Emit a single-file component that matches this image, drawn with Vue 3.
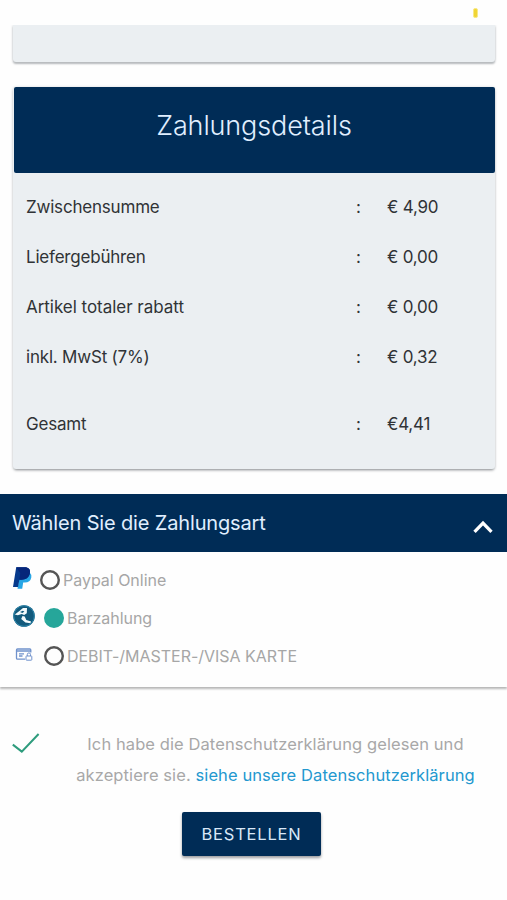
<script setup>
import { ref } from 'vue'

const rows = [
  { label: 'Zwischensumme', value: '€ 4,90' },
  { label: 'Liefergebühren', value: '€ 0,00' },
  { label: 'Artikel totaler rabatt', value: '€ 0,00', wide: true },
  { label: 'inkl. MwSt (7%)', value: '€ 0,32' },
  { label: 'Gesamt', value: '€4,41', total: true },
]
const selected = ref('cash')
</script>

<template>
  <main class="page">
    <header class="status"><span class="battery"></span></header>
    <div class="previous-wrap"><section class="previous"></section></div>

    <section class="details">
      <h1><span>Zahlungsdetails</span></h1>
      <div class="rows">
        <div v-for="row in rows" :key="row.label" class="row" :class="{ total: row.total, wide: row.wide }">
          <span>{{ row.label }}</span><span>:</span><span>{{ row.value }}</span>
        </div>
      </div>
    </section>

    <section class="methods">
      <h2>
        <span>Wählen Sie die Zahlungsart</span>
        <svg width="20" height="14" viewBox="0 0 20 14"><path d="M1.5 11.8 10 3.2 18.5 11.8" fill="none" stroke="#fff" stroke-width="3.3" /></svg>
      </h2>
      <div class="options">
        <div class="option paypal" @click="selected = 'paypal'">
          <svg class="icon" width="19" height="22" viewBox="0 0 19 22">
            <path d="M7 6h10q2 1.5 1.3 4.5-1 5-6.5 5h-1.6l-1 6.2H4.5Z" fill="#27a5e5" />
            <path d="M3.2.3h8.3c4.4 0 6.2 2.3 5.3 6.2-1 4.2-4 6.2-8.2 6.2H6.4L5 20H0Z" fill="#06398c" />
            <path d="M3.2.3h8.3c4.4 0 6.2 2.3 5.3 6.2-1 4.2-4 6.2-8.2 6.2H6.4L7.3 6Z" fill="#06267a" />
          </svg>
          <svg class="radio" :class="{ on: selected === 'paypal' }" viewBox="0 0 20 20"><circle cx="10" cy="10" r="8.8" /></svg>
          <span>Paypal Online</span>
        </div>
        <div class="option" @click="selected = 'cash'">
          <svg class="icon" width="22" height="22" viewBox="0 0 22 22">
            <circle cx="11" cy="11" r="10.8" fill="#125a7c" />
            <circle cx="11" cy="11" r="10.3" fill="none" stroke="#2e86ab" />
            <path d="M1.8 9.4 7 5.4l3-2.4h4l-.2 5.2-2.6 1.9-2.4-1.2-4 1.3Z" fill="#f3fafc" />
            <path d="m7 7 2.8-1.2 1.6.6-2 1.6Z" fill="#125a7c" />
            <path d="m9.5 11 2.2.5 1.6 3.4 4.8 1.5-.7 1.8-5-.6-4.2-3.6Z" fill="#f3fafc" />
          </svg>
          <svg class="radio" :class="{ on: selected === 'cash' }" viewBox="0 0 20 20"><circle cx="10" cy="10" r="8.8" /></svg>
          <span>Barzahlung</span>
        </div>
        <div class="option card" @click="selected = 'card'">
          <svg class="icon" width="22" height="22" viewBox="0 0 22 22">
            <g fill="none" stroke="#7092cc">
              <path d="M12 15.2H4.5q-1 0-1-1V6q0-1 1-1h12.3q1 0 1 1v2.5M3.5 7h14.3" stroke-width="1.3" />
              <path d="M6 9.8h5M6 12h3.5" stroke-width="1.3" />
              <rect x="13" y="12" width="5.8" height="4.2" rx=".6" />
              <path d="M14.3 12v-1.5q0-1.6 1.6-1.6t1.6 1.6V12" />
            </g>
          </svg>
          <svg class="radio" :class="{ on: selected === 'card' }" viewBox="0 0 20 20"><circle cx="10" cy="10" r="8.8" /></svg>
          <span>DEBIT-/MASTER-/VISA KARTE</span>
        </div>
      </div>
    </section>

    <section class="consent">
      <svg width="30" height="24" viewBox="0 0 30 24"><path d="m.8 13.6 9 7L26.6 3" fill="none" stroke="#2e9c7d" stroke-width="2" /></svg>
      <p>Ich habe die Datenschutzerklärung gelesen und<br>akzeptiere sie. <a>siehe unsere Datenschutzerklärung</a></p>
    </section>
    <button><span>BESTELLEN</span></button>
  </main>
</template>

<style>
body { margin: 0; background: #fefefe; }
</style>
<style scoped>
* { box-sizing: border-box; }
.page { height: 900px; overflow: hidden; display: flex; flex-direction: column; background: #fefefe; font-family: Inter, "Liberation Sans", sans-serif; color: #303336; }
.status { height: 25px; flex: none; display: flex; justify-content: flex-end; padding: 8px 29px 0 0; }
.battery { width: 5px; height: 10px; border-radius: 2px; background: #f0d536; border: 1px solid #f8e985; }
.previous-wrap { height: 62px; flex: none; overflow: hidden; padding: 0 12px 0 13px; }
.previous { height: 37px; background: #ebeff2; border-radius: 0 0 3px 3px; box-shadow: 0 2px 2px #b7babd, 0 0 3px #d2d5d7; }
.details { flex: none; margin: 0 12px 0 13px; height: 382px; border-radius: 3px; background: #ebeff2; box-shadow: 0 2px 3px -1px #898c8f, 0 0 3px #d8dbdd; }
h1 { margin: 0 .5px; height: 86px; padding-bottom: 10px; border-radius: 2px; background: #002c56; color: #e0efff; display: flex; align-items: center; justify-content: center; font-size: 27px; font-weight: 300; letter-spacing: -.12px; }
.rows { padding: 8.6px 0 0 13px; }
.row { display: grid; grid-template-columns: 330px 31px 1fr; height: 50.1px; align-items: center; font-size: 17px; letter-spacing: -.2px; }
.row.wide > span:first-child { letter-spacing: -.03px; }
.total { margin-top: 17px; }
.methods { flex: none; margin-top: 25px; height: 193px; background: #fefefe; box-shadow: 0 2px 2px #b7b7b7; }
h2 { height: 58px; margin: 0; padding: 0 14px 0 12px; display: flex; align-items: center; justify-content: space-between; background: #002c56; color: #e0efff; font-size: 20px; font-weight: 400; letter-spacing: -.15px; }
h2 svg { margin-top: 8px; }
.options { padding: 9px 0 0 13px; color: #a6a6a6; font-size: 16px; letter-spacing: -.02px; }
.option { display: flex; align-items: center; height: 38px; }
.icon { flex: none; margin-right: 9px; margin-top: -4px; }
.paypal .icon { margin-right: 8px; }
.card .icon { margin-top: -2px; }
.radio { flex: none; width: 20px; height: 20px; margin-right: 3px; fill: none; stroke: #555; stroke-width: 2.4; }
.radio.on { fill: #26a69a; stroke: #26a69a; }
.consent { display: flex; padding: 43px 32px 0 12px; height: 125px; flex: none; align-items: flex-start; }
.consent svg { flex: none; margin-top: 1px; }
p { margin: -1px 0 0; flex: 1; padding-left: 34px; text-align: center; color: #a8a8a8; font-size: 16.5px; letter-spacing: .09px; line-height: 30.5px; white-space: nowrap; }
a { color: #2398cf; }
button { flex: none; align-self: center; margin: 0 4px 0 0; width: 139px; height: 44px; padding: 0; border: 0; border-radius: 2px; background: #002c56; color: #d9e8f8; box-shadow: 0 2px 3px #9c9d9f; font: 400 16.5px Inter, sans-serif; letter-spacing: .8px; }
</style>
